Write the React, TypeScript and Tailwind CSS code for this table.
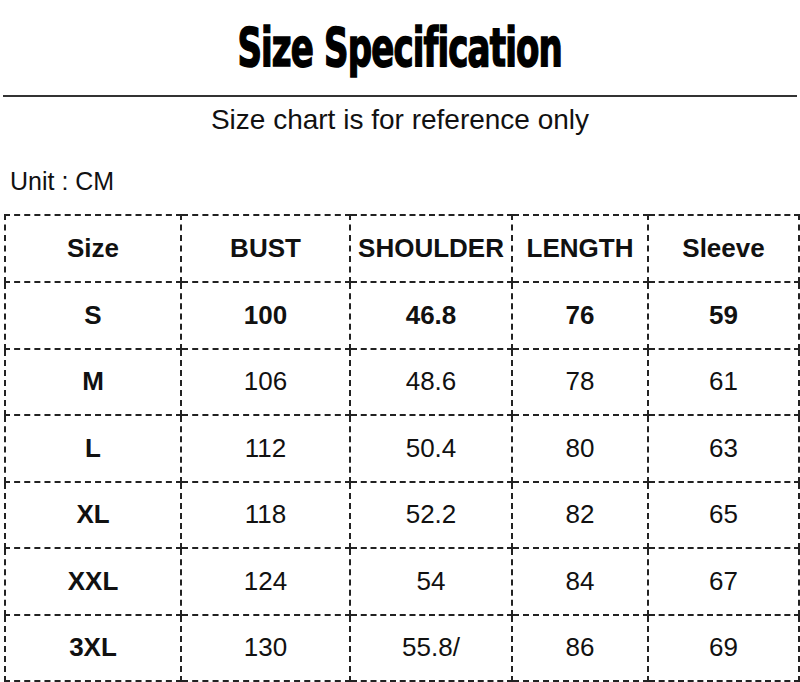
const headers = ['Size', 'BUST', 'SHOULDER', 'LENGTH', 'Sleeve'];

const rows: string[][] = [
	['S', '100', '46.8', '76', '59'],
	['M', '106', '48.6', '78', '61'],
	['L', '112', '50.4', '80', '63'],
	['XL', '118', '52.2', '82', '65'],
	['XXL', '124', '54', '84', '67'],
	['3XL', '130', '55.8/', '86', '69'],
];

const colWidths = ['w-[176px]', 'w-[169px]', 'w-[162px]', 'w-[136px]', 'w-[151px]'];

export default function App() {
	return (
		<div className="w-[800px] h-[682px] bg-white text-[#111] overflow-hidden font-['Liberation_Sans',Arial,sans-serif]">
			<div className="h-[95px] flex items-center justify-center">
				<h1 className="text-[44px] leading-none font-bold tracking-[-1px] scale-x-[0.86] scale-y-[1.22] [-webkit-text-stroke:1.2px_black] font-['Liberation_Sans_Narrow','DejaVu_Sans_Condensed',sans-serif] text-black">
					Size Specification
				</h1>
			</div>
			<div className="mx-[3px] h-[2px] bg-[#333]" />
			<div className="h-[46px] pt-[9px] text-center text-[28px] leading-[28px]">
				Size chart is for reference only
			</div>
			<div className="h-[71px] pl-[10px] pt-[26px] text-[25px] leading-[25px]">Unit : CM</div>
			<div className="pl-[4px]">
				<table className="border-collapse table-fixed w-[794px] text-[26px] text-center">
					<colgroup>
						{colWidths.map((w) => (
							<col key={w} className={w} />
						))}
					</colgroup>
					<thead>
						<tr className="h-[67px]">
							{headers.map((h) => (
								<th
									key={h}
									className="border-2 border-dashed border-[#222] font-bold p-0 whitespace-nowrap"
								>
									{h}
								</th>
							))}
						</tr>
					</thead>
					<tbody>
						{rows.map((row, i) => (
							<tr key={row[0]} className="h-[66.5px]">
								{row.map((cell, j) => (
									<td
										key={j}
										className={
											'border-2 border-dashed border-[#222] p-0 ' +
											(i === 0 || j === 0 ? 'font-bold' : 'font-normal')
										}
									>
										{cell}
									</td>
								))}
							</tr>
						))}
					</tbody>
				</table>
			</div>
		</div>
	);
}
